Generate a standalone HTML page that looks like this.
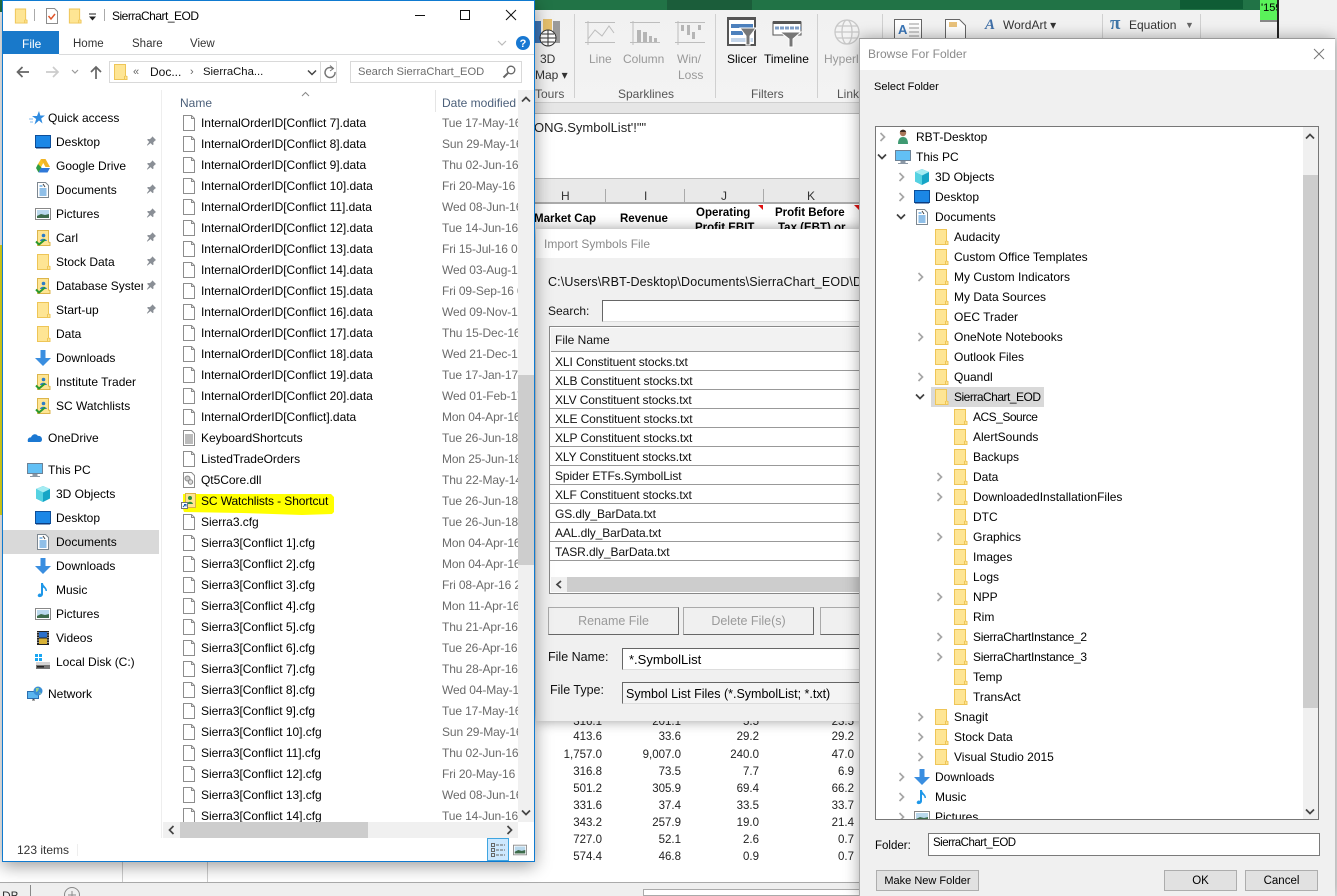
<!DOCTYPE html>
<html><head><meta charset="utf-8"><title>SierraChart_EOD</title>
<style>
html,body{margin:0;padding:0;width:1337px;height:896px;overflow:hidden;background:#fff}
body{position:relative;font:12px/16px "Liberation Sans",sans-serif;color:#000}
.a{position:absolute}
.t{position:absolute;white-space:nowrap;line-height:16px}
svg{position:absolute;overflow:visible}
.g{color:#777}
.r{position:absolute;text-align:right;width:70px;font-size:11.5px;color:#222}
#ex{position:absolute;left:2px;top:0;width:531px;height:860px;background:#fff;border:1px solid #0f7ad0;box-shadow:0 4px 16px rgba(0,0,0,.4);overflow:hidden}
#ex>.in{position:absolute;left:-3px;top:-1px;width:540px;height:870px}
#list{position:absolute;left:163px;top:113px;width:355px;height:709px;overflow:hidden}
#list div{position:relative;height:21px;line-height:21px;white-space:nowrap}
#list svg{left:18px;top:2px}
#list b{font-weight:normal;position:absolute;left:38px;letter-spacing:-.03px}
#list i{font-style:normal;position:absolute;left:279px;color:#6b6b6b;letter-spacing:-.12px}
.n{position:absolute;left:0;width:158px;height:24px}
.n span{position:absolute;left:56px;top:0;white-space:nowrap}
.n svg.ic{left:35px;top:0}
.n svg.p{left:146px;top:1px}
.h{left:48px!important}
#br{position:absolute;left:859px;top:38px;width:475px;height:858px;background:#f0f0f0;border-left:1px solid #aaa;border-top:1px solid #999;box-shadow:0 0 14px rgba(0,0,0,.35)}
#tree{position:absolute;left:875px;top:126px;width:442px;height:692px;background:#fff;border:1px solid #777;overflow:hidden}
#tree div{position:absolute;left:0;height:20px;width:426px}
#tree span{position:absolute;top:2px;white-space:nowrap}
#tree svg{top:2px}
#tree svg[width="8"]{margin-left:-1px}
.btn{position:absolute;background:#e1e1e1;border:1px solid #adadad;text-align:center;box-sizing:border-box;height:21px;line-height:20px;font-size:11.5px}
#im{position:absolute;left:536px;top:229px;width:330px;height:492px;background:#f0f0f0;box-shadow:0 0 12px rgba(0,0,0,.4)}
.row{position:absolute;left:550px;width:310px;height:18px;border-bottom:1px solid #999;background:#fff;line-height:18px;padding-left:5px;box-sizing:border-box;white-space:nowrap;color:#111;letter-spacing:-.1px}
.ib{position:absolute;background:#f0f0f0;border:1px solid #aaa;border-right-color:#666;border-bottom-color:#666;text-align:center;color:#9a9a9a;box-sizing:border-box;height:28px;line-height:26px;font-size:12.5px}
.inp{position:absolute;background:#fff;border:1px solid #ddd;border-top-color:#666;border-left-color:#666;box-sizing:border-box;white-space:nowrap}
</style></head><body>
<svg width="0" height="0" style="position:absolute">
<defs>
<symbol id="f" viewBox="0 0 16 16"><path d="M2.500 .5h11v11.5l1.500 .5v3H2.500z" fill="#fee594" stroke="#eec557"/><path d="M12.500 12v3.500" stroke="#eec557"/></symbol>
<symbol id="doc" viewBox="0 0 16 16"><path d="M2.500 .5h8l3 3v12h-11z" fill="#fff" stroke="#8d8d8d"/><path d="M10.500 .5v3h3" fill="none" stroke="#8d8d8d"/></symbol>
<symbol id="txt" viewBox="0 0 16 16"><path d="M2.500 .5h8l3 3v12h-11z" fill="#fff" stroke="#8d8d8d"/><path d="M4 5h8M4 7h8M4 9h8M4 11h8M4 13h8" stroke="#777"/></symbol>
<symbol id="dll" viewBox="0 0 16 16"><path d="M2.500 .5h8l3 3v12h-11z" fill="#fff" stroke="#8d8d8d"/><circle cx="6.500" cy="6.500" r="2.500" fill="#ccc" stroke="#888"/><circle cx="9.500" cy="10" r="2.200" fill="#ddd" stroke="#888"/></symbol>
<symbol id="lnk" viewBox="0 0 16 16"><path d="M4.500 .5h10v14h-10z" fill="#fee594" stroke="#d9b445"/><circle cx="9" cy="5" r="2" fill="#2d8f3c"/><path d="M6 11c.5-3 5.500-3 6 0z" fill="#2d8f3c"/><rect x=".5" y="9.500" width="6" height="6" fill="#fff" stroke="#777"/><path d="M2 14l2.500-2.500M3 11.500h2v2" fill="none" stroke="#1a5fb0"/></symbol>
<symbol id="ddoc" viewBox="0 0 16 16"><path d="M2.500 .5h8l3 3v12h-11z" fill="#fff" stroke="#7d8790"/><path d="M4.500 4h3M4.500 7h7M4.500 9h7M4.500 11h7M4.500 13h7" stroke="#1f7fd0"/><path d="M8 2l2 3" stroke="#444"/></symbol>
<symbol id="dt" viewBox="0 0 16 16"><rect x=".5" y="1.500" width="15" height="12" fill="#1b87e6" stroke="#0d4f9a"/><path d="M1 13h14v1.500H1z" fill="#0b3c80"/></symbol>
<symbol id="pic" viewBox="0 0 16 16"><rect x=".5" y="2.500" width="15" height="11" fill="#fff" stroke="#888"/><rect x="2" y="4" width="12" height="8" fill="#b9d8ec"/><path d="M2 10l4-2 4 1 4-1v4H2z" fill="#3d6b4a"/></symbol>
<symbol id="ck" viewBox="0 0 16 16"><path d="M2.500 .5h11v11.500l1.500 .5v3H2.500z" fill="#fee594" stroke="#dcb54b"/><circle cx="8.500" cy="5.500" r="1.800" fill="#2b7cc9"/><path d="M5 11c.5-3 6-3 7 0z" fill="#2b7cc9"/><path d="M1 11.500l3 3 6-5" fill="none" stroke="#2b9a2e" stroke-width="2"/></symbol>
<symbol id="gd" viewBox="0 0 16 16"><path d="M6 1h4.500l-5 9-2.500-4z" fill="#f7c325"/><path d="M10.500 1l4.500 8h-4.500l-4.500-8z" fill="#f0b428"/><path d="M3 6l-2 4 2.500 4.500 3-5z" fill="#2e9c45"/><path d="M6 10h9l-2.500 4.500h-9z" fill="#2f78d8"/></symbol>
<symbol id="pin" viewBox="0 0 12 12"><path d="M7 1l4 4-1 .5-2 2 .2 2.300-1 .7-2.200-2.200L1.500 11 1 10.500l2.500-3.500L1.300 4.800l.7-1 2.300.2 2-2z" fill="#8a8f96"/></symbol>
<symbol id="dl" viewBox="0 0 16 16"><path d="M5.500 0h5v8H16l-8 8-8-8h5.500z" fill="#3a8ee0"/></symbol>
<symbol id="mus" viewBox="0 0 16 16"><path d="M6 1h2c0 3 4 4 4 8h-1.500c0-2-1.500-3-2.500-3.500V12c0 2-2 3.500-4 3-2-.5-1.500-3 .5-3.500 .5-.1 1 0 1.500.2z" fill="#1e97e8"/></symbol>
<symbol id="vid" viewBox="0 0 16 16"><rect x="2" y="1" width="12" height="14" fill="#222"/><rect x="4" y="2" width="8" height="5.500" fill="#2a6fc9"/><rect x="4" y="8.500" width="8" height="5.500" fill="#d8b236"/><path d="M2.500 2.500h1M2.500 5h1M2.500 7.500h1M2.500 10h1M2.500 12.500h1M12.500 2.500h1M12.500 5h1M12.500 7.500h1M12.500 10h1M12.500 12.500h1" stroke="#fff"/></symbol>
<symbol id="hd" viewBox="0 0 16 16"><rect x="1" y="9" width="14" height="6" fill="#777"/><rect x="1" y="8" width="14" height="3" fill="#d5d5d5"/><rect x="2" y="12" width="7" height="1.500" fill="#222"/><path d="M0 0h3v3H0zM4 0h3v3H4zM0 4h3v3H0zM4 4h3v3H4z" fill="#19a6f2"/></symbol>
<symbol id="net" viewBox="0 0 16 16"><rect x=".5" y="5.500" width="11" height="7" fill="#5bb6f0" stroke="#2b6fb0"/><path d="M5 14h3M6.500 13v1" stroke="#555"/><circle cx="11" cy="5" r="4.500" fill="#3a8fd6"/><path d="M9 2l3 0-1 3-2 1zM12 6l2 1-1 1.500z" fill="#9bd08e"/></symbol>
<symbol id="od" viewBox="0 0 16 16"><path d="M1 12c-1-3 1-5 3-4.500C5 4 9 3 11 6c2-.5 4 1 4 3.500 0 1.500-1 2.500-2.500 2.500z" fill="#1b78d2"/></symbol>
<symbol id="pc" viewBox="0 0 16 16"><rect x=".5" y="1.500" width="15" height="10" fill="#62c0f5" stroke="#6d8296"/><path d="M6 12.500h4v1H6zM3 14.500h10" stroke="#8b98a5"/></symbol>
<symbol id="cube" viewBox="0 0 16 16"><path d="M8 0l7 3v9.500L8 16 1 12.500V3z" fill="#16a5c6"/><path d="M8 0l7 3-7 3.500L1 3z" fill="#a4ecf2"/><path d="M1 3l7 3.500V16l-7-3.500z" fill="#55d2e2"/></symbol>
<symbol id="star" viewBox="0 0 16 16"><path d="M10 1l1.300 4.500H16l-3.800 3 1.300 5-3.500-3-4.500 4 1.700-5.500L3 6h5z" fill="#2f8be0"/><path d="M0 9h4M1 12h3" stroke="#7fb9ee"/></symbol>
<symbol id="usr" viewBox="0 0 16 16"><circle cx="8" cy="4" r="3.200" fill="#a9775a"/><path d="M5 3c0-3 6-3 6 0z" fill="#3a2a22"/><path d="M3 15c0-5 2-7 5-7s5 2 5 7z" fill="#3f9a72"/></symbol>
<symbol id="cr" viewBox="0 0 8 10"><path d="M1.500 1l4 4-4 4" fill="none" stroke="#a6a6a6" stroke-width="1.700"/></symbol>
<symbol id="cd" viewBox="0 0 10 8"><path d="M1 1.500l4 4 4-4" fill="none" stroke="#404040" stroke-width="1.700"/></symbol>
</defs></svg>

<!-- EXCEL BACKGROUND -->
<div class="a" style="left:0;top:0;width:1337px;height:896px;background:#fff"></div>
<div class="a" style="left:0;top:245px;width:2px;height:270px;background:#f2ea1e"></div>
<div class="a" style="left:0;top:0;width:2px;height:12px;background:#217346"></div>
<div class="a" style="left:534px;top:0;width:726px;height:10px;background:#217346"></div>
<div class="a" style="left:667px;top:0;width:85px;height:10px;background:#1b5d3a"></div>
<div class="a" style="left:1180px;top:0;width:63px;height:9px;background:#0f5c35"></div>
<div class="a" style="left:534px;top:10px;width:726px;height:92px;background:linear-gradient(#f1f1f1,#f3f3f3)"></div>
<div class="a" style="left:534px;top:102px;width:330px;height:12px;background:#e6e6e6;border-top:1px solid #cfcfcf;border-bottom:1px solid #bbb;box-sizing:border-box"></div>
<div class="a" style="left:1260px;top:0;width:17px;height:20px;background:#5af25a"></div>
<div class="a" style="left:1260px;top:20px;width:17px;height:18px;background:#f2f2f2;border-top:2px solid #888;box-sizing:border-box"></div>
<div class="t" style="left:1261px;top:0;font-size:11px">'159</div>
<div class="a" style="left:1277px;top:0;width:2px;height:38px;background:#222"></div>
<div class="a" style="left:1279px;top:0;width:58px;height:38px;background:#f1f1f1"></div>
<div class="a" style="left:1334px;top:38px;width:3px;height:858px;background:#e8e8e8"></div>
<!-- ribbon separators -->
<div class="a" style="left:574px;top:14px;width:1px;height:84px;background:#d0d0d0"></div>
<div class="a" style="left:715px;top:14px;width:1px;height:84px;background:#d0d0d0"></div>
<div class="a" style="left:817px;top:14px;width:1px;height:84px;background:#d0d0d0"></div>
<div class="a" style="left:882px;top:14px;width:1px;height:30px;background:#d0d0d0"></div>
<div class="a" style="left:1102px;top:14px;width:1px;height:30px;background:#d0d0d0"></div>
<div class="a" style="left:1200px;top:14px;width:1px;height:30px;background:#d0d0d0"></div>
<!-- 3D map -->
<svg style="left:534px;top:17px" width="32" height="32"><rect x="0" y="4" width="7" height="22" fill="#3f76b8"/><rect x="9" y="2" width="9" height="14" fill="#e6c06d"/><rect x="19" y="4" width="7" height="22" fill="#9a9a9a"/><circle cx="14" cy="21" r="8" fill="#fff" stroke="#333"/><path d="M6 21h16M14 13v16M8 17h12M8 25h12" stroke="#333" fill="none"/></svg>
<div class="t" style="left:540px;top:51px;color:#333">3D</div>
<div class="t" style="left:535px;top:67px;color:#333">Map ▾</div>
<div class="t" style="left:535px;top:86px;color:#555">Tours</div>
<!-- sparklines -->
<svg style="left:585px;top:21px" width="130" height="24" fill="none" stroke="#bdbdbd"><path d="M0 1.500h30M0 21.500h30M3 0v24M3 18l7-9 7 6 7-10 5 7"/><path d="M45 1.500h30M45 21.500h30M48 0v24"/><path d="M90 1.500h30M90 21.500h30M93 0v24"/><path d="M52 9h4v12h-4zM58 11h4v10h-4zM64 15h3v6h-3zM69 17h3v4h-3z" fill="#b5b5b5" stroke="none"/><path d="M96 4h3v6h-3zM102 4h3v10h-3zM107 11h3v7h-3zM113 4h3v5h-3z" fill="#b5b5b5" stroke="none"/></svg>
<div class="t g" style="left:589px;top:51px;color:#999">Line</div>
<div class="t" style="left:623px;top:51px;color:#999">Column</div>
<div class="t" style="left:677px;top:51px;color:#999">Win/</div>
<div class="t" style="left:678px;top:67px;color:#999">Loss</div>
<div class="t" style="left:618px;top:86px;color:#555">Sparklines</div>
<!-- slicer/timeline -->
<svg style="left:727px;top:17px" width="90" height="30"><rect x="1" y="1" width="27" height="27" fill="#fff" stroke="#555" stroke-width="2"/><rect x="1" y="0" width="28" height="3" fill="#555"/><rect x="4" y="7" width="22" height="4" fill="#4c80bd"/><rect x="4" y="14" width="12" height="4" fill="#4c80bd"/><rect x="4" y="21" width="22" height="4" fill="#c3d5ea"/><path d="M13 11h16l-6 8v9h-4v-9z" fill="#777" stroke="#fff"/><rect x="46" y="5" width="28" height="13" fill="#fff" stroke="#555"/><rect x="46" y="4" width="28" height="3" fill="#555"/><path d="M48 11h26" stroke="#7f9fc8" stroke-width="3" stroke-dasharray="4 1"/><path d="M53 15h21l-8 7v8h-4v-8z" fill="#777" stroke="#fff"/></svg>
<div class="t" style="left:727px;top:51px">Slicer</div>
<div class="t" style="left:764px;top:51px">Timeline</div>
<div class="t" style="left:751px;top:86px;color:#555">Filters</div>
<!-- hyperlink -->
<svg style="left:834px;top:18px" width="26" height="30" fill="none" stroke="#c8c8c8" stroke-width="1.300"><circle cx="13" cy="14" r="12" fill="#f4f4f4"/><ellipse cx="13" cy="14" rx="5" ry="12"/><path d="M1 14h24M3 8h20M3 20h20"/></svg>
<div class="t" style="left:824px;top:51px;color:#999">Hyperl</div>
<div class="t" style="left:837px;top:86px;color:#555">Links</div>
<!-- text group -->
<svg style="left:894px;top:19px" width="75" height="20"><rect x=".5" y=".5" width="27" height="19" fill="#fff" stroke="#666"/><text x="4" y="15" font-size="13" font-weight="bold" fill="#3a76b8" font-family="Liberation Sans">A</text><path d="M15 5h10M15 9h10M15 13h10M15 17h10" stroke="#999"/><path d="M51.500 .5h14l6 6V20h-20z" fill="#fff" stroke="#666"/><rect x="55" y="3" width="8" height="5" fill="#e9c27b"/></svg>
<div class="t" style="left:985px;top:15px;color:#3f6fa8;font:italic bold 15px/20px 'Liberation Serif',serif">A</div>
<div class="t" style="left:1003px;top:17px;color:#333">WordArt ▾</div>
<div class="t" style="left:1110px;top:13px;color:#3f76a8;font:bold 19px/22px 'Liberation Serif',serif">π</div>
<div class="t" style="left:1129px;top:17px;color:#333">Equation</div>
<div class="t" style="left:1185px;top:17px;color:#666;font-size:9px">▼</div>
<!-- formula -->
<div class="t" style="left:534px;top:120px;font-size:13px;color:#222">ONG.SymbolList'!""</div>
<!-- column header -->
<div class="a" style="left:534px;top:178px;width:330px;height:26px;background:#e9e9e9;border-top:1px solid #bbb;border-bottom:2px solid #aaa;box-sizing:border-box"></div>
<div class="a" style="left:605px;top:189px;width:1px;height:15px;background:#aaa"></div>
<div class="a" style="left:684px;top:189px;width:1px;height:15px;background:#aaa"></div>
<div class="a" style="left:763px;top:189px;width:1px;height:15px;background:#aaa"></div>
<div class="a" style="left:859px;top:189px;width:1px;height:15px;background:#aaa"></div>
<div class="t" style="left:561px;top:188px;color:#333">H</div>
<div class="t" style="left:644px;top:188px;color:#333">I</div>
<div class="t" style="left:721px;top:188px;color:#333">J</div>
<div class="t" style="left:807px;top:188px;color:#333">K</div>
<div class="a" style="left:534px;top:205px;width:330px;height:24px;overflow:hidden;font-weight:bold;font-size:11.5px">
<span class="t" style="left:0;top:6px">Market Cap</span><span class="t" style="left:86px;top:6px">Revenue</span><span class="t" style="left:162px;top:0">Operating</span><span class="t" style="left:161px;top:15px">Profit  EBIT</span><span class="t" style="left:241px;top:0">Profit Before</span><span class="t" style="left:244px;top:15px">Tax (EBT) or</span>
<svg style="left:224px;top:0" width="6" height="6"><path d="M0 0h5v5z" fill="#e01010"/></svg><svg style="left:320px;top:0" width="6" height="6"><path d="M0 0h5v5z" fill="#e01010"/></svg></div>
<!-- numbers -->
<div class="r" style="left:532px;top:714px">316.1</div><div class="r" style="left:611px;top:714px">201.1</div><div class="r" style="left:689px;top:714px">5.5</div><div class="r" style="left:784px;top:714px">23.5</div>
<div class="r" style="left:532px;top:729px">413.6</div><div class="r" style="left:611px;top:729px">33.6</div><div class="r" style="left:689px;top:729px">29.2</div><div class="r" style="left:784px;top:729px">29.2</div>
<div class="r" style="left:532px;top:747px">1,757.0</div><div class="r" style="left:611px;top:747px">9,007.0</div><div class="r" style="left:689px;top:747px">240.0</div><div class="r" style="left:784px;top:747px">47.0</div>
<div class="r" style="left:532px;top:764px">316.8</div><div class="r" style="left:611px;top:764px">73.5</div><div class="r" style="left:689px;top:764px">7.7</div><div class="r" style="left:784px;top:764px">6.9</div>
<div class="r" style="left:532px;top:781px">501.2</div><div class="r" style="left:611px;top:781px">305.9</div><div class="r" style="left:689px;top:781px">69.4</div><div class="r" style="left:784px;top:781px">66.2</div>
<div class="r" style="left:532px;top:798px">331.6</div><div class="r" style="left:611px;top:798px">37.4</div><div class="r" style="left:689px;top:798px">33.5</div><div class="r" style="left:784px;top:798px">33.7</div>
<div class="r" style="left:532px;top:815px">343.2</div><div class="r" style="left:611px;top:815px">257.9</div><div class="r" style="left:689px;top:815px">19.0</div><div class="r" style="left:784px;top:815px">21.4</div>
<div class="r" style="left:532px;top:832px">727.0</div><div class="r" style="left:611px;top:832px">52.1</div><div class="r" style="left:689px;top:832px">2.6</div><div class="r" style="left:784px;top:832px">0.7</div>
<div class="r" style="left:532px;top:849px">574.4</div><div class="r" style="left:611px;top:849px">46.8</div><div class="r" style="left:689px;top:849px">0.9</div><div class="r" style="left:784px;top:849px">0.7</div>
<!-- sheet bottom -->
<div class="a" style="left:0;top:882px;width:860px;height:14px;background:#efefef;border-top:1px solid #aaa;box-sizing:border-box"></div>
<div class="a" style="left:122px;top:862px;width:1px;height:20px;background:#ccc"></div>
<div class="a" style="left:207px;top:862px;width:1px;height:20px;background:#ccc"></div>
<div class="a" style="left:30px;top:885px;width:1px;height:11px;background:#888"></div>
<div class="t" style="left:2px;top:888px;color:#333">DB</div>
<svg style="left:64px;top:887px" width="16" height="16" fill="none" stroke="#888"><circle cx="8" cy="8" r="7.500"/><path d="M4 8h8M8 4v8"/></svg>
<div class="a" style="left:643px;top:889px;width:217px;height:7px;background:#fff;border:1px solid #aaa;box-sizing:border-box"></div>

<!-- IMPORT DIALOG -->
<div id="im"><div class="a" style="left:0;top:0;width:100%;height:29px;background:#fff"></div></div>
<div class="t" style="left:544px;top:236px;color:#8a8a8a">Import Symbols File</div>
<div class="t" style="left:548px;top:274px;width:311px;overflow:hidden;color:#111;font-size:12.500px;letter-spacing:.15px">C:\Users\RBT-Desktop\Documents\SierraChart_EOD\Data</div>
<div class="t" style="left:548px;top:303px;color:#111">Search:</div>
<div class="inp" style="left:602px;top:300px;width:258px;height:22px"></div>
<div class="a" style="left:549px;top:326px;width:311px;height:268px;background:#fff;border:1px solid #888;border-right:0;box-sizing:border-box"></div>
<div class="a" style="left:551px;top:328px;width:309px;height:24px;background:#f2f2f2;border-bottom:1px solid #999;box-sizing:border-box"></div>
<div class="t" style="left:555px;top:332px;color:#111">File Name</div>
<div class="row" style="top:353px">XLI Constituent stocks.txt</div>
<div class="row" style="top:372px">XLB Constituent stocks.txt</div>
<div class="row" style="top:391px">XLV Constituent stocks.txt</div>
<div class="row" style="top:410px">XLE Constituent stocks.txt</div>
<div class="row" style="top:429px">XLP Constituent stocks.txt</div>
<div class="row" style="top:448px">XLY Constituent stocks.txt</div>
<div class="row" style="top:467px">Spider ETFs.SymbolList</div>
<div class="row" style="top:486px">XLF Constituent stocks.txt</div>
<div class="row" style="top:505px">GS.dly_BarData.txt</div>
<div class="row" style="top:524px">AAL.dly_BarData.txt</div>
<div class="row" style="top:543px">TASR.dly_BarData.txt</div>
<div class="a" style="left:551px;top:577px;width:309px;height:15px;background:#f0f0f0"></div>
<div class="a" style="left:567px;top:577px;width:293px;height:15px;background:#cdcdcd"></div>
<svg style="left:555px;top:580px" width="8" height="9"><path d="M6 1L2 4.500 6 8" fill="none" stroke="#444" stroke-width="1.700"/></svg>
<div class="ib" style="left:548px;top:607px;width:131px">Rename File</div>
<div class="ib" style="left:683px;top:607px;width:131px">Delete File(s)</div>
<div class="ib" style="left:820px;top:607px;width:40px;border-right:0"></div>
<div class="t" style="left:548px;top:649px;color:#111;font-size:12.500px">File Name:</div>
<div class="inp" style="left:622px;top:648px;width:238px;height:22px;padding-left:6px;line-height:21px;font-size:13px">*.SymbolList</div>
<div class="t" style="left:550px;top:682px;color:#111;font-size:12.500px">File Type:</div>
<div class="inp" style="left:622px;top:682px;width:238px;height:22px;padding-left:3px;line-height:22px;font-size:12.500px;background:#f4f4f4">Symbol List Files (*.SymbolList; *.txt)</div>

<!-- EXPLORER -->
<div id="ex"><div class="in">
<!-- title -->
<svg style="left:13px;top:8px" width="15" height="16"><use href="#f"/></svg>
<div class="a" style="left:34px;top:9px;width:1px;height:12px;background:#aaa"></div>
<svg style="left:44px;top:8px" width="16" height="16"><path d="M2.500 .5h8l3 3v12h-11z" fill="#fff" stroke="#8d8d8d"/><path d="M4.500 8l2.500 3 4-5" fill="none" stroke="#e0552a" stroke-width="1.500"/></svg>
<svg style="left:67px;top:8px" width="15" height="16"><use href="#f"/></svg>
<svg style="left:88px;top:13px" width="9" height="9"><path d="M1 1h7" stroke="#222"/><path d="M1 3.500h7L4.500 7.500z" fill="#222"/></svg>
<div class="a" style="left:104px;top:9px;width:1px;height:12px;background:#aaa"></div>
<div class="t" style="left:112px;top:8px;letter-spacing:-.5px">SierraChart_EOD</div>
<svg style="left:410px;top:5px" width="112" height="20" fill="none" stroke="#111" stroke-width="1"><path d="M5 10.500h10"/><rect x="50.500" y="5.500" width="9" height="9"/><path d="M96 5l10 10M106 5L96 15"/></svg>
<!-- tabs -->
<div class="a" style="left:3px;top:31px;width:56px;height:23px;background:#1979ca"></div>
<div class="t" style="left:22px;top:36px;color:#fff">File</div>
<div class="t" style="left:73px;top:36px;color:#333;font-size:11.500px">Home</div>
<div class="t" style="left:132px;top:36px;color:#333;font-size:11.500px">Share</div>
<div class="t" style="left:190px;top:36px;color:#333;font-size:11.500px">View</div>
<div class="a" style="left:59px;top:54px;width:475px;height:1px;background:#dadbdc"></div>
<svg style="left:497px;top:40px" width="10" height="7"><path d="M1 1l4 4 4-4" fill="none" stroke="#bbb" stroke-width="1.200"/></svg>
<svg style="left:516px;top:36px" width="14" height="14"><circle cx="7" cy="7" r="7" fill="#1878d2"/><text x="7" y="11" text-anchor="middle" font-size="11" font-weight="bold" fill="#fff" font-family="Liberation Sans">?</text></svg>
<!-- nav -->
<svg style="left:15px;top:64px" width="100" height="16" fill="none"><path d="M14 8H3M7.500 3L2.500 8l5 5" stroke="#666" stroke-width="1.700"/><path d="M31 8h11M38 3l5 5-5 5" stroke="#ccc" stroke-width="1.700"/><path d="M57 6l3 3 3-3" stroke="#999" stroke-width="1.200"/><path d="M81 15V3M76 8l5-5 5 5" stroke="#666" stroke-width="1.700"/></svg>
<div class="a" style="left:109px;top:61px;width:228px;height:22px;border:1px solid #d9d9d9;box-sizing:border-box"></div>
<div class="a" style="left:320px;top:62px;width:1px;height:20px;background:#d9d9d9"></div>
<svg style="left:112px;top:64px" width="16" height="16"><use href="#f"/></svg>
<div class="t" style="left:133px;top:64px;color:#666;font-size:11px">«</div>
<div class="t" style="left:150px;top:64px;color:#111">Doc...</div>
<div class="t" style="left:190px;top:64px;color:#666;font-size:11px">›</div>
<div class="t" style="left:203px;top:64px;color:#111;font-size:11.300px">SierraCha...</div>
<svg style="left:307px;top:69px" width="10" height="8"><path d="M1 1.500l4 4 4-4" fill="none" stroke="#444" stroke-width="1.500"/></svg>
<svg style="left:323px;top:65px" width="14" height="14" fill="none" stroke="#777" stroke-width="1.500"><path d="M10 3.500A5 5 0 1 0 12 7"/><path d="M7 .5l3.500 3L7 6" stroke-width="1"/></svg>
<div class="a" style="left:350px;top:61px;width:172px;height:22px;border:1px solid #d9d9d9;box-sizing:border-box"></div>
<div class="t" style="left:358px;top:64px;color:#6d6d6d;font-size:11.200px">Search SierraChart_EOD</div>
<svg style="left:502px;top:65px" width="14" height="14" fill="none" stroke="#666" stroke-width="1.300"><circle cx="9" cy="5" r="3.800"/><path d="M6.200 7.800L1.500 12.500" stroke-width="2"/></svg>
<!-- nav pane -->
<div class="a" style="left:161px;top:90px;width:1px;height:748px;background:#eee"></div>
<div class="a" style="left:3px;top:530px;width:156px;height:24px;background:#d9d9d9"></div>
<div class="n" style="top:110px"><svg class="ic" style="left:29px" width="16" height="16"><use href="#star"/></svg><span class="h">Quick access</span></div>
<div class="n" style="top:134px"><svg class="ic" width="16" height="16"><use href="#dt"/></svg><span>Desktop</span><svg class="p" width="11" height="12"><use href="#pin"/></svg></div>
<div class="n" style="top:158px"><svg class="ic" width="16" height="16"><use href="#gd"/></svg><span>Google Drive</span><svg class="p" width="11" height="12"><use href="#pin"/></svg></div>
<div class="n" style="top:182px"><svg class="ic" width="16" height="16"><use href="#ddoc"/></svg><span>Documents</span><svg class="p" width="11" height="12"><use href="#pin"/></svg></div>
<div class="n" style="top:206px"><svg class="ic" width="16" height="16"><use href="#pic"/></svg><span>Pictures</span><svg class="p" width="11" height="12"><use href="#pin"/></svg></div>
<div class="n" style="top:230px"><svg class="ic" width="16" height="16"><use href="#ck"/></svg><span>Carl</span><svg class="p" width="11" height="12"><use href="#pin"/></svg></div>
<div class="n" style="top:254px"><svg class="ic" width="16" height="16"><use href="#f"/></svg><span>Stock Data</span><svg class="p" width="11" height="12"><use href="#pin"/></svg></div>
<div class="n" style="top:278px"><svg class="ic" width="16" height="16"><use href="#ck"/></svg><span style="width:87px;overflow:hidden">Database System</span><svg class="p" width="11" height="12"><use href="#pin"/></svg></div>
<div class="n" style="top:302px"><svg class="ic" width="16" height="16"><use href="#f"/></svg><span>Start-up</span><svg class="p" width="11" height="12"><use href="#pin"/></svg></div>
<div class="n" style="top:326px"><svg class="ic" width="16" height="16"><use href="#f"/></svg><span>Data</span></div>
<div class="n" style="top:350px"><svg class="ic" width="16" height="16"><use href="#dl"/></svg><span>Downloads</span></div>
<div class="n" style="top:374px"><svg class="ic" width="16" height="16"><use href="#ck"/></svg><span>Institute Trader</span></div>
<div class="n" style="top:398px"><svg class="ic" width="16" height="16"><use href="#ck"/></svg><span>SC Watchlists</span></div>
<div class="n" style="top:430px"><svg class="ic" style="left:27px" width="16" height="16"><use href="#od"/></svg><span class="h">OneDrive</span></div>
<div class="n" style="top:462px"><svg class="ic" style="left:27px" width="16" height="16"><use href="#pc"/></svg><span class="h">This PC</span></div>
<div class="n" style="top:486px"><svg class="ic" width="16" height="16"><use href="#cube"/></svg><span>3D Objects</span></div>
<div class="n" style="top:510px"><svg class="ic" width="16" height="16"><use href="#dt"/></svg><span>Desktop</span></div>
<div class="n" style="top:534px"><svg class="ic" width="16" height="16"><use href="#ddoc"/></svg><span>Documents</span></div>
<div class="n" style="top:558px"><svg class="ic" width="16" height="16"><use href="#dl"/></svg><span>Downloads</span></div>
<div class="n" style="top:582px"><svg class="ic" width="16" height="16"><use href="#mus"/></svg><span>Music</span></div>
<div class="n" style="top:606px"><svg class="ic" width="16" height="16"><use href="#pic"/></svg><span>Pictures</span></div>
<div class="n" style="top:630px"><svg class="ic" width="16" height="16"><use href="#vid"/></svg><span>Videos</span></div>
<div class="n" style="top:654px"><svg class="ic" width="16" height="16"><use href="#hd"/></svg><span>Local Disk (C:)</span></div>
<div class="n" style="top:686px"><svg class="ic" style="left:27px" width="16" height="16"><use href="#net"/></svg><span class="h">Network</span></div>
<!-- headers -->
<div class="t" style="left:180px;top:95px;color:#4c607a">Name</div>
<svg style="left:301px;top:91px" width="9" height="6"><path d="M1 5l3.500-3.500L8 5" fill="none" stroke="#888"/></svg>
<div class="a" style="left:435px;top:90px;width:1px;height:22px;background:#e5e5e5"></div>
<div class="t" style="left:442px;top:95px;width:76px;overflow:hidden;color:#4c607a">Date modified</div>
<!-- highlight -->
<svg style="left:182px;top:493px" width="153" height="23"><path d="M1 1h148l3 3v15l-2 2-30 1-60-2-58-1-1-3z" fill="#ffff00"/></svg>
<!-- list -->
<div id="list">
<div><svg width="16" height="16"><use href="#doc"/></svg><b>InternalOrderID[Conflict 7].data</b><i>Tue 17-May-16</i></div>
<div><svg width="16" height="16"><use href="#doc"/></svg><b>InternalOrderID[Conflict 8].data</b><i>Sun 29-May-16</i></div>
<div><svg width="16" height="16"><use href="#doc"/></svg><b>InternalOrderID[Conflict 9].data</b><i>Thu 02-Jun-16</i></div>
<div><svg width="16" height="16"><use href="#doc"/></svg><b>InternalOrderID[Conflict 10].data</b><i>Fri 20-May-16</i></div>
<div><svg width="16" height="16"><use href="#doc"/></svg><b>InternalOrderID[Conflict 11].data</b><i>Wed 08-Jun-16</i></div>
<div><svg width="16" height="16"><use href="#doc"/></svg><b>InternalOrderID[Conflict 12].data</b><i>Tue 14-Jun-16</i></div>
<div><svg width="16" height="16"><use href="#doc"/></svg><b>InternalOrderID[Conflict 13].data</b><i>Fri 15-Jul-16 07</i></div>
<div><svg width="16" height="16"><use href="#doc"/></svg><b>InternalOrderID[Conflict 14].data</b><i>Wed 03-Aug-16</i></div>
<div><svg width="16" height="16"><use href="#doc"/></svg><b>InternalOrderID[Conflict 15].data</b><i>Fri 09-Sep-16 0</i></div>
<div><svg width="16" height="16"><use href="#doc"/></svg><b>InternalOrderID[Conflict 16].data</b><i>Wed 09-Nov-16</i></div>
<div><svg width="16" height="16"><use href="#doc"/></svg><b>InternalOrderID[Conflict 17].data</b><i>Thu 15-Dec-16</i></div>
<div><svg width="16" height="16"><use href="#doc"/></svg><b>InternalOrderID[Conflict 18].data</b><i>Wed 21-Dec-16</i></div>
<div><svg width="16" height="16"><use href="#doc"/></svg><b>InternalOrderID[Conflict 19].data</b><i>Tue 17-Jan-17</i></div>
<div><svg width="16" height="16"><use href="#doc"/></svg><b>InternalOrderID[Conflict 20].data</b><i>Wed 01-Feb-17</i></div>
<div><svg width="16" height="16"><use href="#doc"/></svg><b>InternalOrderID[Conflict].data</b><i>Mon 04-Apr-16</i></div>
<div><svg width="16" height="16"><use href="#txt"/></svg><b>KeyboardShortcuts</b><i>Tue 26-Jun-18</i></div>
<div><svg width="16" height="16"><use href="#doc"/></svg><b>ListedTradeOrders</b><i>Mon 25-Jun-18</i></div>
<div><svg width="16" height="16"><use href="#dll"/></svg><b>Qt5Core.dll</b><i>Thu 22-May-14</i></div>
<div><svg width="16" height="16"><use href="#lnk"/></svg><b style="letter-spacing:-.1px">SC Watchlists - Shortcut</b><i>Tue 26-Jun-18</i></div>
<div><svg width="16" height="16"><use href="#doc"/></svg><b>Sierra3.cfg</b><i>Tue 26-Jun-18</i></div>
<div><svg width="16" height="16"><use href="#doc"/></svg><b>Sierra3[Conflict 1].cfg</b><i>Mon 04-Apr-16</i></div>
<div><svg width="16" height="16"><use href="#doc"/></svg><b>Sierra3[Conflict 2].cfg</b><i>Mon 04-Apr-16</i></div>
<div><svg width="16" height="16"><use href="#doc"/></svg><b>Sierra3[Conflict 3].cfg</b><i>Fri 08-Apr-16 2</i></div>
<div><svg width="16" height="16"><use href="#doc"/></svg><b>Sierra3[Conflict 4].cfg</b><i>Mon 11-Apr-16</i></div>
<div><svg width="16" height="16"><use href="#doc"/></svg><b>Sierra3[Conflict 5].cfg</b><i>Thu 21-Apr-16</i></div>
<div><svg width="16" height="16"><use href="#doc"/></svg><b>Sierra3[Conflict 6].cfg</b><i>Tue 26-Apr-16</i></div>
<div><svg width="16" height="16"><use href="#doc"/></svg><b>Sierra3[Conflict 7].cfg</b><i>Thu 28-Apr-16</i></div>
<div><svg width="16" height="16"><use href="#doc"/></svg><b>Sierra3[Conflict 8].cfg</b><i>Wed 04-May-16</i></div>
<div><svg width="16" height="16"><use href="#doc"/></svg><b>Sierra3[Conflict 9].cfg</b><i>Tue 17-May-16</i></div>
<div><svg width="16" height="16"><use href="#doc"/></svg><b>Sierra3[Conflict 10].cfg</b><i>Sun 29-May-16</i></div>
<div><svg width="16" height="16"><use href="#doc"/></svg><b>Sierra3[Conflict 11].cfg</b><i>Thu 02-Jun-16</i></div>
<div><svg width="16" height="16"><use href="#doc"/></svg><b>Sierra3[Conflict 12].cfg</b><i>Fri 20-May-16</i></div>
<div><svg width="16" height="16"><use href="#doc"/></svg><b>Sierra3[Conflict 13].cfg</b><i>Wed 08-Jun-16</i></div>
<div><svg width="16" height="16"><use href="#doc"/></svg><b>Sierra3[Conflict 14].cfg</b><i>Tue 14-Jun-16</i></div>
</div>
<!-- v scrollbar -->
<div class="a" style="left:518px;top:90px;width:16px;height:732px;background:#f0f0f0"></div>
<div class="a" style="left:518px;top:375px;width:16px;height:190px;background:#cdcdcd"></div>
<svg style="left:521px;top:96px" width="10" height="7"><path d="M1 5.500l4-4 4 4" fill="none" stroke="#444" stroke-width="1.700"/></svg>
<svg style="left:521px;top:809px" width="10" height="7"><path d="M1 1.500l4 4 4-4" fill="none" stroke="#444" stroke-width="1.700"/></svg>
<!-- h scrollbar -->
<div class="a" style="left:163px;top:822px;width:355px;height:16px;background:#f0f0f0"></div>
<div class="a" style="left:180px;top:822px;width:188px;height:16px;background:#cdcdcd"></div>
<svg style="left:168px;top:825px" width="7" height="10"><path d="M5.500 1l-4 4 4 4" fill="none" stroke="#444" stroke-width="1.700"/></svg>
<svg style="left:506px;top:825px" width="7" height="10"><path d="M1.500 1l4 4-4 4" fill="none" stroke="#444" stroke-width="1.700"/></svg>
<!-- status -->
<div class="t" style="left:17px;top:842px;color:#333">123 items</div>
<div class="a" style="left:77px;top:844px;width:1px;height:12px;background:#eee"></div>
<div class="a" style="left:487px;top:838px;width:22px;height:23px;background:#cce8ff;border:1px solid #3fa5e0;box-sizing:border-box"></div>
<svg style="left:490px;top:842px" width="16" height="16" fill="none" stroke="#666"><path d="M1.500 1.500h3v3h-3zM1.500 6.500h3v3h-3zM1.500 11.500h3v3h-3z"/><path d="M6 3h9M6 8h9M6 13h9" stroke-dasharray="3 1"/></svg>
<svg style="left:512px;top:843px" width="16" height="14"><use href="#pic"/></svg>
</div></div>

<!-- BROWSE FOR FOLDER -->
<div id="br"><div class="a" style="left:0;top:0;width:100%;height:31px;background:#fff"></div></div>
<div class="t" style="left:868px;top:46px;color:#8a8a8a">Browse For Folder</div>
<svg style="left:1313px;top:48px" width="12" height="12"><path d="M1 1l10 10M11 1L1 11" stroke="#777"/></svg>
<div class="t" style="left:874px;top:79px;font-size:11px">Select Folder</div>
<div id="tree">
<div style="top:0"><svg style="left:4px;top:5px" width="8" height="10"><use href="#cr"/></svg><svg style="left:19px" width="16" height="16"><use href="#usr"/></svg><span style="left:40px">RBT-Desktop</span></div>
<div style="top:20px"><svg style="left:1px;top:6px" width="10" height="8"><use href="#cd"/></svg><svg style="left:19px" width="16" height="16"><use href="#pc"/></svg><span style="left:40px">This PC</span></div>
<div style="top:40px"><svg style="left:23px;top:5px" width="8" height="10"><use href="#cr"/></svg><svg style="left:38px" width="16" height="16"><use href="#cube"/></svg><span style="left:59px">3D Objects</span></div>
<div style="top:60px"><svg style="left:23px;top:5px" width="8" height="10"><use href="#cr"/></svg><svg style="left:38px" width="16" height="16"><use href="#dt"/></svg><span style="left:59px">Desktop</span></div>
<div style="top:80px"><svg style="left:20px;top:6px" width="10" height="8"><use href="#cd"/></svg><svg style="left:38px" width="16" height="16"><use href="#ddoc"/></svg><span style="left:59px">Documents</span></div>
<div style="top:100px"><svg style="left:57px" width="16" height="16"><use href="#f"/></svg><span style="left:78px">Audacity</span></div>
<div style="top:120px"><svg style="left:57px" width="16" height="16"><use href="#f"/></svg><span style="left:78px">Custom Office Templates</span></div>
<div style="top:140px"><svg style="left:42px;top:5px" width="8" height="10"><use href="#cr"/></svg><svg style="left:57px" width="16" height="16"><use href="#f"/></svg><span style="left:78px">My Custom Indicators</span></div>
<div style="top:160px"><svg style="left:57px" width="16" height="16"><use href="#f"/></svg><span style="left:78px">My Data Sources</span></div>
<div style="top:180px"><svg style="left:57px" width="16" height="16"><use href="#f"/></svg><span style="left:78px">OEC Trader</span></div>
<div style="top:200px"><svg style="left:42px;top:5px" width="8" height="10"><use href="#cr"/></svg><svg style="left:57px" width="16" height="16"><use href="#f"/></svg><span style="left:78px">OneNote Notebooks</span></div>
<div style="top:220px"><svg style="left:57px" width="16" height="16"><use href="#f"/></svg><span style="left:78px">Outlook Files</span></div>
<div style="top:240px"><svg style="left:42px;top:5px" width="8" height="10"><use href="#cr"/></svg><svg style="left:57px" width="16" height="16"><use href="#f"/></svg><span style="left:78px">Quandl</span></div>
<div style="top:260px"><i class="a" style="left:55px;top:0;width:113px;height:20px;background:#d9d9d9"></i><svg style="left:39px;top:6px" width="10" height="8"><use href="#cd"/></svg><svg style="left:57px" width="16" height="16"><use href="#f"/></svg><span style="left:78px;letter-spacing:-.5px">SierraChart_EOD</span></div>
<div style="top:280px"><svg style="left:76px" width="16" height="16"><use href="#f"/></svg><span style="left:97px;letter-spacing:-.5px">ACS_Source</span></div>
<div style="top:300px"><svg style="left:76px" width="16" height="16"><use href="#f"/></svg><span style="left:97px">AlertSounds</span></div>
<div style="top:320px"><svg style="left:76px" width="16" height="16"><use href="#f"/></svg><span style="left:97px">Backups</span></div>
<div style="top:340px"><svg style="left:61px;top:5px" width="8" height="10"><use href="#cr"/></svg><svg style="left:76px" width="16" height="16"><use href="#f"/></svg><span style="left:97px">Data</span></div>
<div style="top:360px"><svg style="left:61px;top:5px" width="8" height="10"><use href="#cr"/></svg><svg style="left:76px" width="16" height="16"><use href="#f"/></svg><span style="left:97px">DownloadedInstallationFiles</span></div>
<div style="top:380px"><svg style="left:76px" width="16" height="16"><use href="#f"/></svg><span style="left:97px">DTC</span></div>
<div style="top:400px"><svg style="left:61px;top:5px" width="8" height="10"><use href="#cr"/></svg><svg style="left:76px" width="16" height="16"><use href="#f"/></svg><span style="left:97px">Graphics</span></div>
<div style="top:420px"><svg style="left:76px" width="16" height="16"><use href="#f"/></svg><span style="left:97px">Images</span></div>
<div style="top:440px"><svg style="left:76px" width="16" height="16"><use href="#f"/></svg><span style="left:97px">Logs</span></div>
<div style="top:460px"><svg style="left:61px;top:5px" width="8" height="10"><use href="#cr"/></svg><svg style="left:76px" width="16" height="16"><use href="#f"/></svg><span style="left:97px">NPP</span></div>
<div style="top:480px"><svg style="left:76px" width="16" height="16"><use href="#f"/></svg><span style="left:97px">Rim</span></div>
<div style="top:500px"><svg style="left:61px;top:5px" width="8" height="10"><use href="#cr"/></svg><svg style="left:76px" width="16" height="16"><use href="#f"/></svg><span style="left:97px;letter-spacing:-.3px">SierraChartInstance_2</span></div>
<div style="top:520px"><svg style="left:61px;top:5px" width="8" height="10"><use href="#cr"/></svg><svg style="left:76px" width="16" height="16"><use href="#f"/></svg><span style="left:97px;letter-spacing:-.3px">SierraChartInstance_3</span></div>
<div style="top:540px"><svg style="left:76px" width="16" height="16"><use href="#f"/></svg><span style="left:97px">Temp</span></div>
<div style="top:560px"><svg style="left:76px" width="16" height="16"><use href="#f"/></svg><span style="left:97px">TransAct</span></div>
<div style="top:580px"><svg style="left:42px;top:5px" width="8" height="10"><use href="#cr"/></svg><svg style="left:57px" width="16" height="16"><use href="#f"/></svg><span style="left:78px">Snagit</span></div>
<div style="top:600px"><svg style="left:42px;top:5px" width="8" height="10"><use href="#cr"/></svg><svg style="left:57px" width="16" height="16"><use href="#f"/></svg><span style="left:78px">Stock Data</span></div>
<div style="top:620px"><svg style="left:42px;top:5px" width="8" height="10"><use href="#cr"/></svg><svg style="left:57px" width="16" height="16"><use href="#f"/></svg><span style="left:78px">Visual Studio 2015</span></div>
<div style="top:640px"><svg style="left:23px;top:5px" width="8" height="10"><use href="#cr"/></svg><svg style="left:38px" width="16" height="16"><use href="#dl"/></svg><span style="left:59px">Downloads</span></div>
<div style="top:660px"><svg style="left:23px;top:5px" width="8" height="10"><use href="#cr"/></svg><svg style="left:38px" width="16" height="16"><use href="#mus"/></svg><span style="left:59px">Music</span></div>
<div style="top:680px"><svg style="left:23px;top:5px" width="8" height="10"><use href="#cr"/></svg><svg style="left:38px" width="16" height="16"><use href="#pic"/></svg><span style="left:59px">Pictures</span></div>
<i class="a" style="left:427px;top:0;width:15px;height:692px;background:#f0f0f0"></i>
<i class="a" style="left:427px;top:48px;width:15px;height:533px;background:#cdcdcd"></i>
<svg style="left:429px;top:6px" width="10" height="7"><path d="M1 5.500l4-4 4 4" fill="none" stroke="#444" stroke-width="1.700"/></svg>
<svg style="left:429px;top:681px" width="10" height="7"><path d="M1 1.500l4 4 4-4" fill="none" stroke="#444" stroke-width="1.700"/></svg>
</div>
<div class="t" style="left:875px;top:838px;font-size:11.500px">Folder:</div>
<div class="a" style="left:928px;top:833px;width:392px;height:23px;background:#fff;border:1px solid #7a7a7a;box-sizing:border-box;padding-left:4px;line-height:19px;font-size:11.500px;letter-spacing:-.5px">SierraChart_EOD</div>
<div class="btn" style="left:876px;top:870px;width:103px;font-size:11px">Make New Folder</div>
<div class="btn" style="left:1164px;top:870px;width:73px">OK</div>
<div class="btn" style="left:1245px;top:870px;width:73px">Cancel</div>
</body></html>
